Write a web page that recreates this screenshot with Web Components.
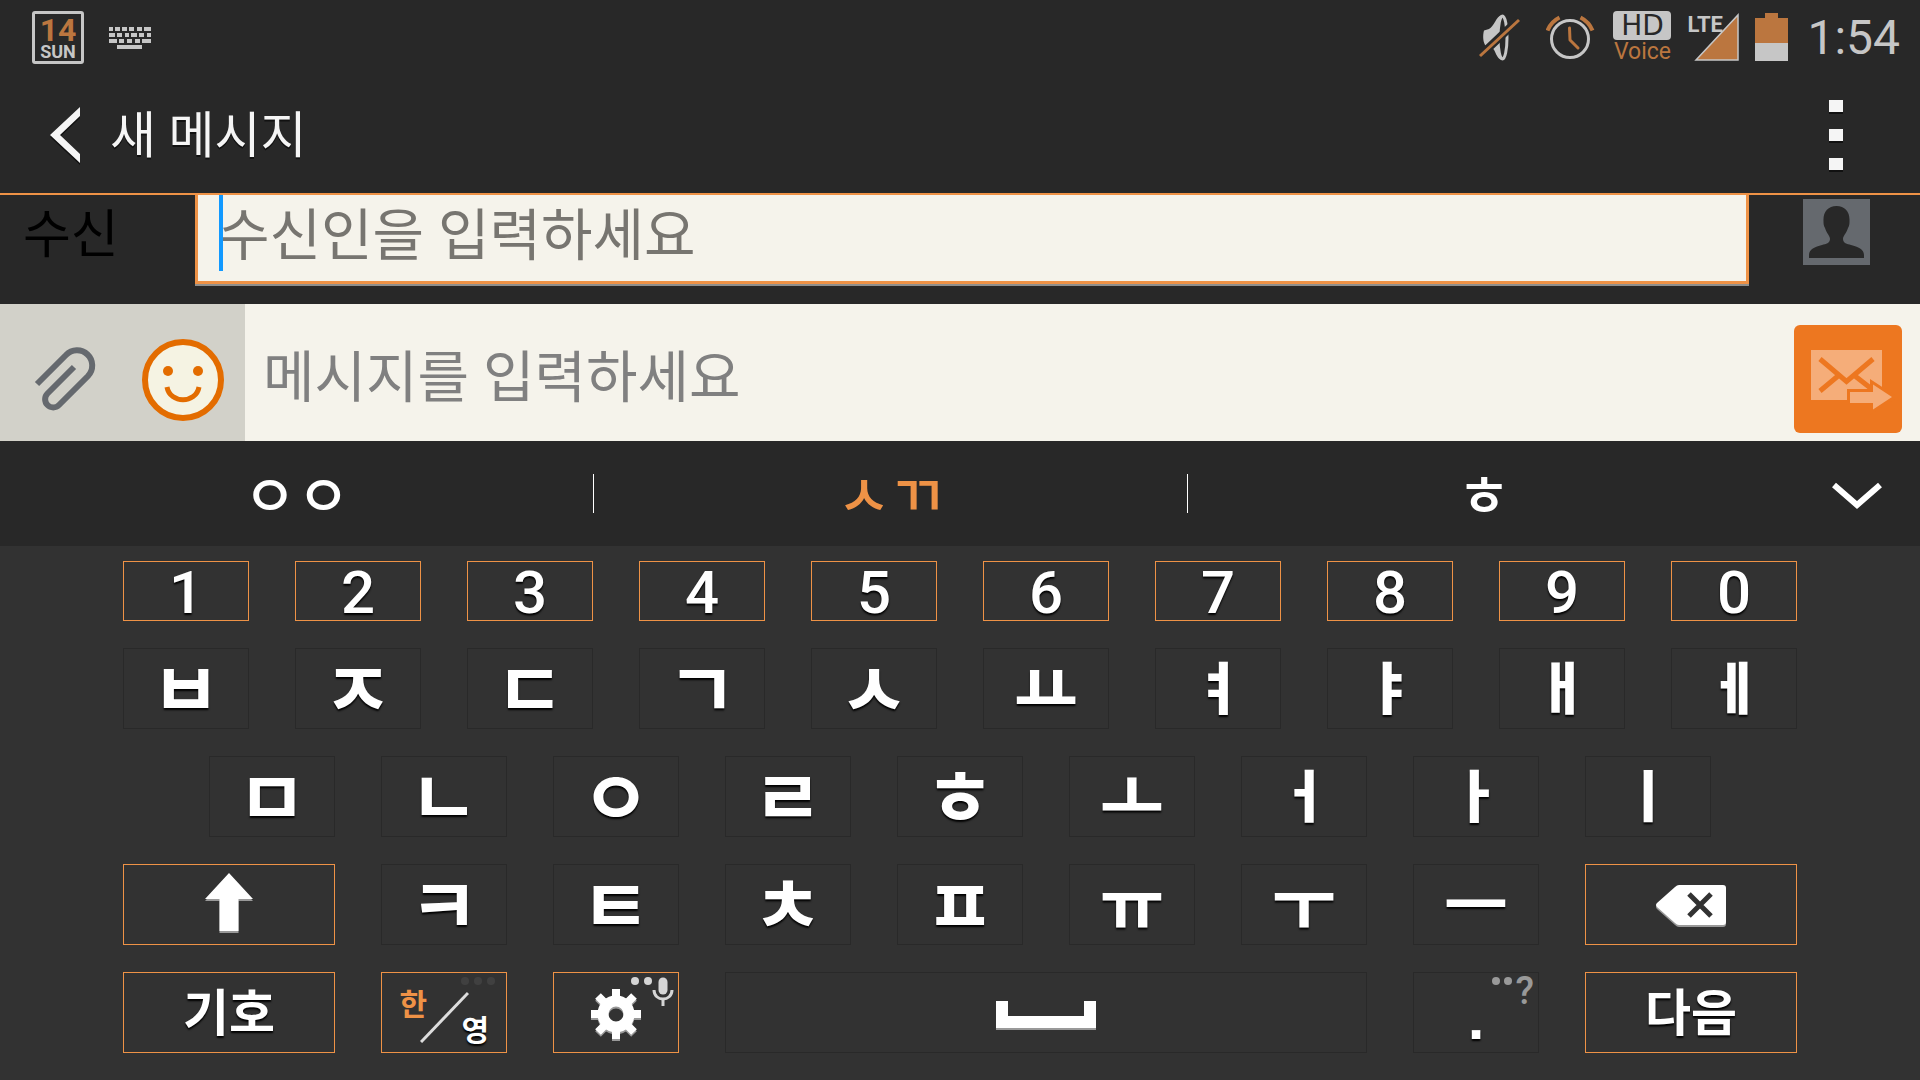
<!DOCTYPE html>
<html lang="ko">
<head>
<meta charset="UTF-8">
<meta name="viewport" content="width=device-width, initial-scale=1">
<title>새 메시지</title>
<style>
  :root {
    --bar: #282828;
    --pad: #323232;
    --accent: #ee9246;
    --paper: #f5f3eb;
    --status: #c6c6c6;
    --status-accent: #bb763f;
  }

  body {
    margin: 0;
    background: var(--pad);
    font-family: Roboto, "Noto Sans CJK KR", sans-serif;
  }
</style>
</head>
<body>
<message-app></message-app>

<script>
  class StatusBar extends HTMLElement {
    constructor() {
      super();
      this.attachShadow({ mode: 'open' });
      this.shadowRoot.innerHTML = `
        <style>
          :host {
            display: flex;
            align-items: center;
            gap: 16px;
            box-sizing: border-box;
            height: 72px;
            padding: 2px 20px 0 32px;
            background: var(--bar);
            color: var(--status);
          }
          svg { display: block; }
          .calendar {
            box-sizing: border-box;
            width: 52px;
            height: 53px;
            margin-right: 9px;
            border: 3px solid var(--status);
            border-radius: 3px;
            text-align: center;
            font-weight: 700;
          }
          .day {
            display: block;
            font-size: 32px;
            line-height: 28px;
            padding-top: 2px;
            color: var(--status-accent);
          }
          .week {
            display: block;
            font-size: 18px;
            line-height: 16px;
          }
          .space { flex: 1; }
          .hd { width: 58px; text-align: center; }
          .hd b {
            display: block;
            border-radius: 4px;
            background: var(--status);
            color: var(--bar);
            font: 400 28px/29px "DejaVu Sans", sans-serif;
          }
          .hd span {
            display: block;
            font-size: 23px;
            line-height: 24px;
            color: var(--status-accent);
          }
          .signal { position: relative; }
          .signal span {
            position: absolute;
            left: 0;
            top: 0;
            font-weight: 700;
            font-size: 22px;
            line-height: 24px;
          }
          time { padding-top: 2px; font-size: 48px; line-height: 56px; }
        </style>
        <div class="calendar"><span class="day">14</span><span class="week">SUN</span></div>
        <svg width="42" height="24" viewBox="0 -2 42 24" fill="none" stroke="#c6c6c6">
          <path stroke-width="4" d="M0 2h4m2 0h5m2 0h5m2 0h5m3 0h5m2 0h7"/>
          <path stroke-width="4" d="M0 8h6m2 0h5m3 0h4m2 0h6m2 0h5m3 0h4"/>
          <path stroke-width="4" d="M0 14h8m2 0h5m3 0h5m3 0h5m2 0h9"/>
          <path stroke-width="4" d="M8 20h25"/>
        </svg>
        <span class="space"></span>
        <svg width="52" height="50" viewBox="0 0 52 50">
          <path fill="#c6c6c6" d="M24 3C18 4 16 15 11 17L6 18.500C4.500 24 5 31 8 34L14 36C18 38 18 47 24 48Z"/>
          <ellipse cx="24.500" cy="25.500" rx="4.500" ry="21.500" fill="#282828" stroke="#c6c6c6" stroke-width="3"/>
          <path stroke="#282828" stroke-width="8" d="M3 43L40 8"/>
          <path stroke="#bb763f" stroke-width="3" d="M2 44L41 8"/>
        </svg>
        <svg width="51" height="48" viewBox="0 -2 51 48" fill="none">
          <circle cx="24" cy="24" r="18.500" stroke="#c6c6c6" stroke-width="3"/>
          <path stroke="#bb763f" stroke-width="3" stroke-linecap="round" stroke-linejoin="round" d="M23.500 13L24 25L32 33"/>
          <path stroke="#bb763f" stroke-width="4" d="M1.500 15.500A25 25 0 0 1 13.500 2.500M34.500 2.500A25 25 0 0 1 46.500 15.500"/>
        </svg>
        <div class="hd"><b>HD</b><span>Voice</span></div>
        <div class="signal">
          <svg width="52" height="48" viewBox="0 0 52 48">
            <path fill="#bb763f" stroke="#c6c6c6" stroke-width="1.500" d="M51 2V47H9Z"/>
          </svg>
          <span>LTE</span>
        </div>
        <svg width="36" height="48" viewBox="0 0 36 48">
          <path fill="#bb763f" d="M10 0h13v5h10v25H0V5h10z"/>
          <path fill="#c6c6c6" d="M0 30h33v18H0z"/>
        </svg>
        <time>1:54</time>
      `;
    }
  }
  customElements.define('status-bar', StatusBar);

  class TitleBar extends HTMLElement {
    constructor() {
      super();
      this.attachShadow({ mode: 'open' });
      this.shadowRoot.innerHTML = `
        <style>
          :host {
            display: flex;
            align-items: center;
            height: 121px;
            border-bottom: 2px solid var(--accent);
            background: var(--bar);
            color: #f5f5f5;
          }
          button {
            border: 0;
            padding: 0;
            background: none;
            cursor: pointer;
          }
          .back { padding: 4px 30px 0 50px; }
          .more { padding: 6px 77px 0; }
          svg { display: block; filter: drop-shadow(0 2px 0 #111); }
          h1 {
            flex: 1;
            margin: 0;
            padding-top: 6px;
            font-size: 50px;
            line-height: 74px;
            font-weight: 400;
            text-shadow: 0 2px 0 #111;
          }
        </style>
        <button class="back" aria-label="뒤로">
          <svg width="30" height="56" viewBox="0 0 30 56"><path fill="#f5f5f5" d="M30 0V9L10 28L30 47V56L0 28Z"/></svg>
        </button>
        <h1><slot></slot></h1>
        <button class="more" aria-label="더보기">
          <svg width="14" height="72" viewBox="0 0 14 72"><path fill="#f5f5f5" d="M0 0h14v12H0zM0 29h14v12H0zM0 58h14v12H0z"/></svg>
        </button>
      `;
    }
  }
  customElements.define('title-bar', TitleBar);

  class RecipientRow extends HTMLElement {
    constructor() {
      super();
      this.attachShadow({ mode: 'open' });
      this.shadowRoot.innerHTML = `
        <style>
          :host {
            display: grid;
            grid-template-columns: 172px minmax(0, 1fr) 67px;
            align-items: start;
            height: 109px;
            padding: 0 50px 0 23px;
            background: var(--bar);
          }
          label {
            font-size: 52px;
            line-height: 82px;
            color: #000;
          }
          .field { position: relative; margin-right: 54px; }
          input {
            display: block;
            box-sizing: border-box;
            width: 100%;
            height: 89px;
            padding: 0 20px 4px;
            border: 3px solid var(--accent);
            border-top: 0;
            border-radius: 0;
            outline: 0;
            background: var(--paper);
            box-shadow: 0 2px 0 #8f8f8d;
            font: 400 56px/80px Roboto, "Noto Sans CJK KR", sans-serif;
            color: #333;
            caret-color: #1199ff;
          }
          input::placeholder { color: #777570; opacity: 1; }
          .caret {
            position: absolute;
            left: 24px;
            top: 0;
            width: 4px;
            height: 76px;
            background: #1199ff;
          }
          button {
            margin-top: 4px;
            border: 0;
            padding: 0;
            background: none;
            cursor: pointer;
          }
          svg { display: block; }
        </style>
        <label for="to">수신</label>
        <div class="field">
          <input id="to" type="text" placeholder="수신인을 입력하세요">
          <span class="caret"></span>
        </div>
        <button aria-label="연락처">
          <svg width="67" height="66" viewBox="0 0 67 66">
            <path fill="#65696e" d="M0 0h67v66H0z"/>
            <path fill="#282828" d="M33.500 7C42 7 47 13 46.500 22C46.500 24 46.500 27 45 29C43.500 34 40 37 40 40C40 44 44 45 48 46C55 48 61 50 61 56V59H6V56C6 50 12 48 19 46C23 45 27 44 27 40C27 37 23.500 34 22 29C20.500 27 20.500 24 20.500 22C20 13 25 7 33.500 7Z"/>
          </svg>
        </button>
      `;
    }
  }
  customElements.define('recipient-row', RecipientRow);

  class MessageRow extends HTMLElement {
    constructor() {
      super();
      this.attachShadow({ mode: 'open' });
      this.shadowRoot.innerHTML = `
        <style>
          :host {
            display: flex;
            height: 137px;
            background: var(--paper);
          }
          .tools {
            box-sizing: border-box;
            display: flex;
            align-items: center;
            justify-content: space-between;
            width: 245px;
            padding: 14px 20px 0 32px;
            background: #d2d1c9;
          }
          button {
            border: 0;
            padding: 0;
            background: none;
            cursor: pointer;
          }
          input {
            flex: 1;
            min-width: 0;
            padding: 10px 20px 0 18px;
            border: 0;
            outline: 0;
            background: none;
            font: 400 56px/80px Roboto, "Noto Sans CJK KR", sans-serif;
            color: #333;
          }
          input::placeholder { color: #808080; opacity: 1; }
          .send {
            align-self: center;
            margin: 13px 18px 0 0;
            border-radius: 6px;
            background: #ed7720;
          }
          svg { display: block; }
        </style>
        <div class="tools">
          <button aria-label="첨부">
            <svg width="66" height="68" viewBox="0 0 66 68" fill="none" stroke="#65696e" stroke-width="6">
              <path d="M5 38L34 9A15 15 0 0 1 56 30L27 59A8 8 0 0 1 15.500 47.500L42 21"/>
            </svg>
          </button>
          <button aria-label="이모티콘">
            <svg width="84" height="84" viewBox="0 0 84 84">
              <circle cx="42" cy="42" r="38" fill="#f5f3e3" stroke="#e36c00" stroke-width="6"/>
              <circle cx="27" cy="33" r="5" fill="#e36c00"/>
              <circle cx="57" cy="33" r="5" fill="#e36c00"/>
              <path fill="none" stroke="#e36c00" stroke-width="5" d="M26 49C29 66 55 66 58 49"/>
            </svg>
          </button>
        </div>
        <input type="text" aria-label="메시지" placeholder="메시지를 입력하세요">
        <button class="send" aria-label="보내기">
          <svg width="108" height="108" viewBox="0 0 108 108">
            <path fill="#f5ad79" d="M17 25h71v50H17z"/>
            <path fill="none" stroke="#ed7720" stroke-width="5" d="M26 34L52.500 56.500L79 34M26 66L44 51M61 51L79 65"/>
            <path fill="#f5ad79" stroke="#ed7720" stroke-width="6" paint-order="stroke" d="M56 67h23v-7.500L98 72L79 84.500V78H56z"/>
          </svg>
        </button>
      `;
    }
  }
  customElements.define('message-row', MessageRow);

  class SuggestionBar extends HTMLElement {
    constructor() {
      super();
      this.attachShadow({ mode: 'open' });
      this.shadowRoot.innerHTML = `
        <style>
          :host {
            display: grid;
            grid-template-columns: repeat(3, minmax(0, 1fr)) 140px;
            align-items: center;
            height: 105px;
            background: var(--bar);
          }
          button {
            border: 0;
            padding: 0;
            background: none;
            color: #fff;
            font: 500 58px/80px "Noto Sans CJK KR", sans-serif;
            cursor: pointer;
          }
          .best { color: var(--accent); }
          .word {
            display: flex;
            align-items: center;
            justify-content: center;
          }
          .word button { flex: 1; padding-bottom: 4px; }
          .word + .word::before {
            content: "";
            width: 1px;
            height: 39px;
            background: #fff;
          }
          svg { display: block; margin: 4px auto 0 51px; }
        </style>
        <div class="word"><button>ㅇㅇ</button></div>
        <div class="word"><button class="best">ㅅㄲ</button></div>
        <div class="word"><button>ㅎ</button></div>
        <button aria-label="펼치기">
          <svg width="52" height="28" viewBox="0 0 52 28" fill="none" stroke="#fff" stroke-width="6"><path d="M3 3L26 23L49 3"/></svg>
        </button>
      `;
    }
  }
  customElements.define('suggestion-bar', SuggestionBar);

  // One key. "span" is its width in half-key columns, "accent" gives it the orange frame.
  class SoftKey extends HTMLElement {
    constructor() {
      super();
      this.attachShadow({ mode: 'open' });
      this.shadowRoot.innerHTML = `
        <style>
          :host { display: block; position: relative; }
          button {
            display: flex;
            align-items: center;
            justify-content: center;
            box-sizing: border-box;
            width: 100%;
            height: 100%;
            padding: 0;
            border: 1px solid #292929;
            background: none;
            color: #fff;
            font: 700 76px/60px "Noto Sans CJK KR", sans-serif;
            text-shadow: 0 2px 2px #000;
            cursor: pointer;
          }
          :host([accent]) button { border-color: var(--accent); }
          :host([kind="consonant"]) button { padding-bottom: 8px; }
          :host([kind="flat"]) button { padding-bottom: 8px; font-size: 70px; }
          :host([kind="tall"]) button { padding-bottom: 8px; font-size: 56px; font-weight: 900; }
          :host([kind="word"]) button { padding-bottom: 8px; font-size: 50px; }
          :host([kind="digit"]) button { padding-top: 3px; font: 500 60px/58px Roboto, sans-serif; }
          :host([kind="dot"]) button { padding-top: 12px; font: 700 60px/60px "Liberation Sans", sans-serif; }
          ::slotted(svg) { display: block; filter: drop-shadow(0 2px 0 #999); }
          .hint {
            position: absolute;
            top: 4px;
            right: 5px;
            pointer-events: none;
          }
        </style>
        <button><slot></slot></button>
        <span class="hint"><slot name="hint"></slot></span>
      `;
    }

    connectedCallback() {
      const span = this.getAttribute('span') || 2;
      const start = this.getAttribute('start') || 'auto';
      this.style.gridColumn = `${start} / span ${span}`;
      const name = this.getAttribute('name');
      if (name) this.shadowRoot.querySelector('button').setAttribute('aria-label', name);
    }
  }
  customElements.define('soft-key', SoftKey);

  class KeyBoard extends HTMLElement {
    constructor() {
      super();
      this.attachShadow({ mode: 'open' });
      const keys = (text, attrs) => [...text].map((c) => `<soft-key ${attrs}>${c}</soft-key>`).join('');

      this.shadowRoot.innerHTML = `
        <style>
          :host {
            display: grid;
            grid-template-columns: repeat(20, minmax(0, 1fr));
            grid-template-rows: 60px repeat(4, 81px);
            gap: 27px 46px;
            padding: 15px 123px 27px;
            background: var(--pad);
          }
          .lang {
            display: grid;
            grid-template-columns: 27px 35px 27px;
            justify-content: center;
            width: 100%;
            font-size: 30px;
            line-height: 36px;
          }
          .lang span:first-child { padding-top: 4px; color: var(--accent); text-shadow: none; }
          .lang span:last-child { padding-top: 30px; }
          .lang svg { margin: 11px -7px 0; }
          .hint-row { display: flex; align-items: start; gap: 5px; }
          .hint-row i {
            width: 8px;
            height: 8px;
            margin-top: 1px;
            border-radius: 50%;
            background: currentColor;
          }
          .more { color: #404040; padding-right: 7px; }
          .voice { color: #d5d5d5; }
          .voice svg { margin-left: -5px; }
          .mark { color: #999; font: 500 38px/30px Roboto, sans-serif; gap: 4px; }
        </style>
        ${keys('1234567890', 'kind="digit" accent')}
        ${keys('ㅂㅈㄷㄱㅅ', 'kind="consonant"')}
        ${keys('ㅛ', 'kind="flat"')}
        ${keys('ㅕㅑㅐㅔ', 'kind="tall"')}
        <soft-key start="2" kind="consonant">ㅁ</soft-key>
        ${keys('ㄴㅇㄹㅎ', 'kind="consonant"')}
        ${keys('ㅗ', 'kind="flat"')}
        ${keys('ㅓㅏㅣ', 'kind="tall"')}
        <soft-key start="1" span="3" accent name="시프트">
          <svg width="48" height="64" viewBox="0 0 48 64"><path fill="#fff" d="M24 0L48 26H33.500V58H14.500V26H0Z"/></svg>
        </soft-key>
        ${keys('ㅋㅌㅊㅍ', 'kind="consonant"')}
        ${keys('ㅠㅜㅡ', 'kind="flat"')}
        <soft-key span="3" accent name="지우기">
          <svg width="70" height="40" viewBox="0 0 70 40">
            <path fill="#fff" d="M23 0H67Q70 0 70 3V37Q70 40 67 40H23Q21 40 19 38L1 22Q-1 20 1 18L19 2Q21 0 23 0Z"/>
            <path stroke="#323232" stroke-width="5" d="M33 9L55 31M55 9L33 31"/>
          </svg>
        </soft-key>
        <soft-key span="3" kind="word" accent>기호</soft-key>
        <soft-key accent>
          <span class="lang">
            <span>한</span>
            <svg width="49" height="52" viewBox="0 0 49 52"><path stroke="#ddd" stroke-width="3" d="M1 51L48 2"/></svg>
            <span>영</span>
          </span>
          <span slot="hint" class="hint-row more"><i></i><i></i><i></i></span>
        </soft-key>
        <soft-key accent name="설정">
          <svg width="50" height="52" viewBox="-25 -27 50 52">
            <circle r="13" fill="none" stroke="#fff" stroke-width="11"/>
            <path stroke="#fff" stroke-width="8" d="M0 -25V-15M0 25V15M-25 0H-15M25 0H15M-18 -18L-11 -11M18 18L11 11M18 -18L11 -11M-18 18L-11 11"/>
          </svg>
          <span slot="hint" class="hint-row voice"><i></i><i></i>
            <svg width="22" height="30" viewBox="0 0 22 30" fill="none" stroke="#d5d5d5">
              <path stroke-width="9" stroke-linecap="round" d="M11 6V14"/>
              <path stroke-width="3" d="M2 14C2 26 20 26 20 14"/>
              <path stroke-width="3" d="M11 23V30"/>
            </svg>
          </span>
        </soft-key>
        <soft-key span="8" name="스페이스">
          <svg width="100" height="30" viewBox="0 -3 100 30"><path fill="#fff" d="M0 0h12v15h76V0h12v27H0z"/></svg>
        </soft-key>
        <soft-key kind="dot">.
          <span slot="hint" class="hint-row mark"><i></i><i></i>?</span>
        </soft-key>
        <soft-key span="3" kind="word" accent>다음</soft-key>
      `;
    }
  }
  customElements.define('key-board', KeyBoard);

  class MessageApp extends HTMLElement {
    constructor() {
      super();
      this.attachShadow({ mode: 'open' });
      this.shadowRoot.innerHTML = `
        <style>
          :host { display: flex; flex-direction: column; min-height: 100vh; }
          key-board { flex: 1; }
        </style>
        <status-bar></status-bar>
        <title-bar>새 메시지</title-bar>
        <recipient-row></recipient-row>
        <message-row></message-row>
        <suggestion-bar></suggestion-bar>
        <key-board></key-board>
      `;
    }
  }
  customElements.define('message-app', MessageApp);
</script>
</body>
</html>
